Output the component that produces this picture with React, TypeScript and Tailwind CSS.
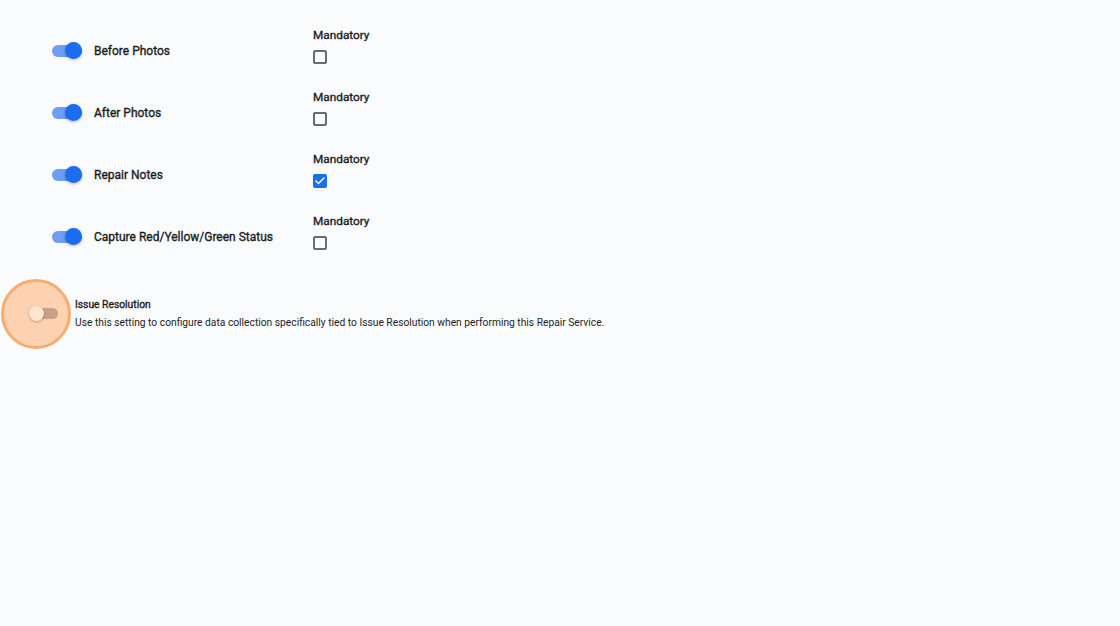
import { Check } from 'lucide-react'

type Field = { name: string; mandatory: boolean }

const fields: Field[] = [
  { name: 'Before Photos', mandatory: false },
  { name: 'After Photos', mandatory: false },
  { name: 'Repair Notes', mandatory: true },
  { name: 'Capture Red/Yellow/Green Status', mandatory: false },
]

const medium = '[-webkit-text-stroke:0.35px_currentColor]'

function OnSwitch() {
  return (
    <div className="relative w-[30px] h-[20px] flex items-center">
      <div className="w-[30px] h-[12px] rounded-full bg-[#6e9ef6]" />
      <div className="absolute right-0 top-[1px] w-[17px] h-[17px] rounded-full bg-[#1c6cf0] shadow-[0_1px_3px_rgba(0,0,0,0.3)]" />
    </div>
  )
}

function Box({ checked }: { checked: boolean }) {
  if (checked) {
    return (
      <div className="w-[14px] h-[14px] rounded-[2px] bg-[#1c6cf0] flex items-center justify-center">
        <Check size={12} strokeWidth={3} className="text-white" />
      </div>
    )
  }
  return <div className="w-[14px] h-[14px] rounded-[2px] border-2 border-[#6b6b6b]" />
}

export default function App() {
  return (
    <div className="min-h-[626px] bg-[#fafbfd] text-[#1d1d1f]" style={{ fontFamily: 'Roboto, "Liberation Sans", sans-serif' }}>
      <div className="pt-[27px] pl-[52px] flex flex-col gap-[25px]">
        {fields.map((f) => (
          <div key={f.name} className="flex items-start h-[37px]">
            <div className="w-[261px] flex items-center gap-[12px] mt-[14px]">
              <OnSwitch />
              <span className={`text-[12px] leading-[20px] ${medium}`}>{f.name}</span>
            </div>
            <div className="flex flex-col gap-[7px]">
              <span className={`text-[11.8px] leading-[16px] ${medium}`}>Mandatory</span>
              <Box checked={f.mandatory} />
            </div>
          </div>
        ))}
      </div>

      <div className="mt-[29px] pl-[1px] flex items-center gap-[4px]">
        <div className="relative w-[70px] h-[70px] flex items-center">
          <div className="absolute inset-0 rounded-full bg-[#fdd2b0] border-[3px] border-[#f7ad72]" />
          <div className="absolute left-[29px] top-[29px] w-[28px] h-[11px] rounded-full bg-[#c8a086]" />
          <div className="absolute left-[28px] top-[27px] w-[15px] h-[15px] rounded-full bg-[#fde4d2] shadow-[0_1px_3px_rgba(0,0,0,0.25)]" />
        </div>
        <div className="flex flex-col">
          <span className={`text-[10.3px] leading-[18px] ${medium}`}>Issue Resolution</span>
          <span className="text-[10.25px] leading-[18px]">
            Use this setting to configure data collection specifically tied to Issue Resolution when performing this Repair Service.
          </span>
        </div>
      </div>
    </div>
  )
}
